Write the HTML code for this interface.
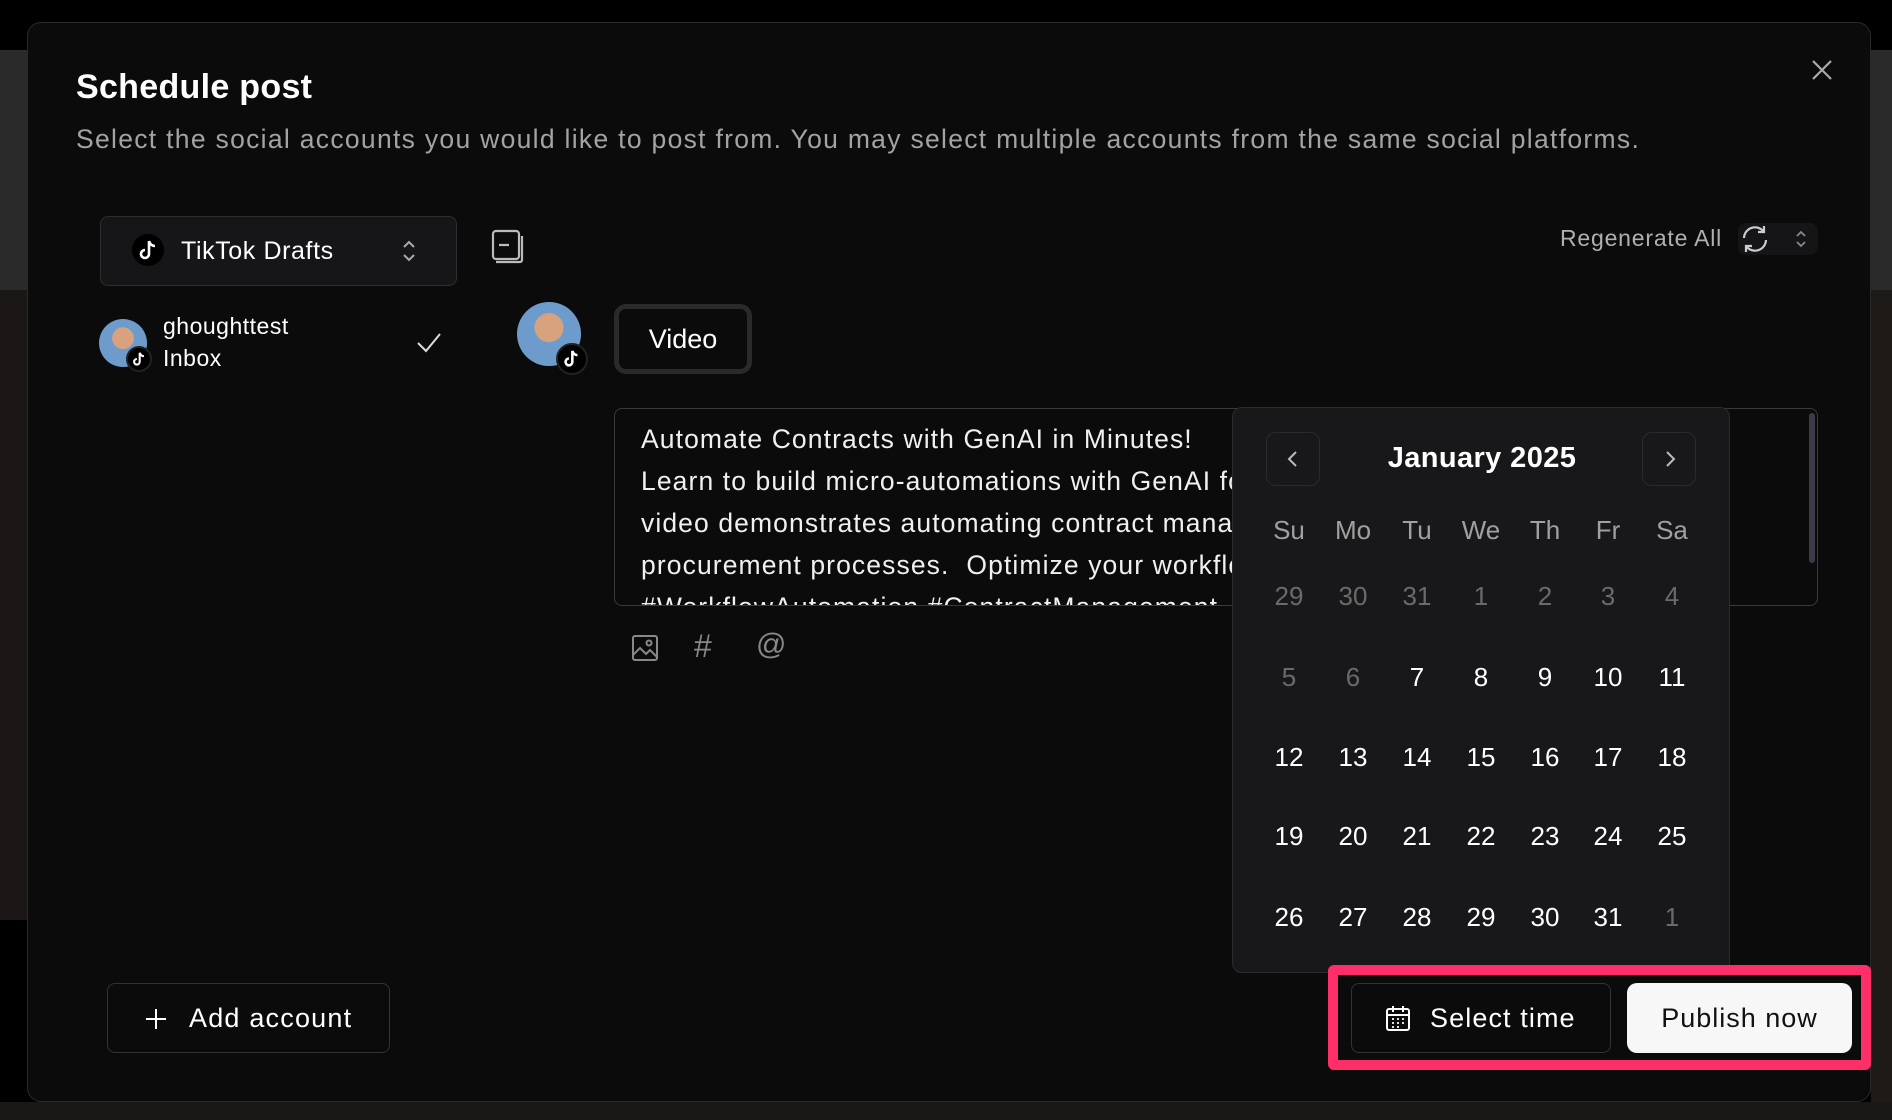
<!DOCTYPE html>
<html><head><meta charset="utf-8"><style>
*{box-sizing:border-box;margin:0;padding:0}
body{width:1892px;height:1120px;background:#000;position:relative;overflow:hidden;font-family:"Liberation Sans",sans-serif;color:#fff}
.a{position:absolute}
.modal{left:27px;top:22px;width:1844px;height:1080px;background:#0b0b0b;border:1px solid #2a2a2a;border-radius:14px}
.cal{left:1232px;top:407px;width:498px;height:566px;background:#18181a;border:1px solid #2c2c2e;border-radius:10px}
.d{position:absolute;width:60px;text-align:center;font-size:26px;transform:translateX(-30px)}
.g{color:#6a6a6a}
.h{color:#a0a0a0}
</style></head><body>
<div class="a" style="left:0;top:50px;width:27px;height:240px;background:#2a2a2a"></div>
<div class="a" style="left:0;top:290px;width:27px;height:630px;background:#1a1716"></div>
<div class="a" style="left:1871px;top:50px;width:21px;height:240px;background:#2a2a2a"></div>
<div class="a" style="left:1871px;top:290px;width:21px;height:820px;background:#1d1a18"></div>
<div class="a" style="left:0;top:1102px;width:1892px;height:18px;background:#1a1816"></div>
<div class="a modal"></div>
<div class="a" style="left:76px;top:68px;font-size:34px;font-weight:bold;letter-spacing:0.3px">Schedule post</div>
<div class="a" style="left:76px;top:124px;font-size:26.5px;letter-spacing:1.3px;color:#a3a3a3;white-space:nowrap">Select the social accounts you would like to post from. You may select multiple accounts from the same social platforms.</div>
<svg class="a" style="left:1810px;top:58px" width="24" height="24" viewBox="0 0 24 24"><path d="M3 3L21 21M21 3L3 21" stroke="#aaa" stroke-width="2.2"/></svg>

<div class="a" style="left:100px;top:216px;width:357px;height:70px;background:#161618;border:1px solid #2e2e30;border-radius:8px"></div>
<div class="a" style="left:132px;top:234px;width:32px;height:32px;border-radius:50%;background:#000"></div>
<svg class="a" style="left:138px;top:238px" width="20" height="24" viewBox="0 0 20 24"><path d="M11 3v13a4 4 0 1 1-4-4M11 3c1 3 3 5 6 5" stroke="#fff" stroke-width="2.6" fill="none"/></svg>
<div class="a" style="left:181px;top:237px;font-size:25px;letter-spacing:0.6px">TikTok Drafts</div>
<svg class="a" style="left:400px;top:238px" width="18" height="26" viewBox="0 0 18 26"><path d="M4 9l5-5 5 5M4 17l5 5 5-5" stroke="#aaa" stroke-width="2" fill="none"/></svg>
<svg class="a" style="left:490px;top:229px" width="34" height="36" viewBox="0 0 34 36"><rect x="3" y="2" width="26" height="28" rx="3" stroke="#bbb" stroke-width="2.2" fill="none"/><path d="M9 16h10M6 33h24a2 2 0 0 0 2-2V7" stroke="#bbb" stroke-width="2.2" fill="none"/></svg>

<div class="a" style="left:99px;top:319px;width:48px;height:48px;border-radius:50%;background:radial-gradient(circle at 50% 40%,#d9a27e 0 28%,#6d9ccc 30%)"></div>
<div class="a" style="left:126px;top:346px;width:26px;height:26px;border-radius:50%;background:#000;border:2px solid #222"></div>
<svg class="a" style="left:132px;top:350px" width="14" height="18" viewBox="0 0 20 24"><path d="M11 3v13a4 4 0 1 1-4-4M11 3c1 3 3 5 6 5" stroke="#fff" stroke-width="3" fill="none"/></svg>
<div class="a" style="left:163px;top:313px;font-size:23px;letter-spacing:0.5px">ghoughttest</div>
<div class="a" style="left:163px;top:345px;font-size:23px;letter-spacing:0.5px">Inbox</div>
<svg class="a" style="left:416px;top:332px" width="26" height="22" viewBox="0 0 26 22"><path d="M2 11l8 8L24 2" stroke="#ddd" stroke-width="2" fill="none"/></svg>

<div class="a" style="left:517px;top:302px;width:64px;height:64px;border-radius:50%;background:radial-gradient(circle at 50% 40%,#d9a27e 0 28%,#6d9ccc 30%)"></div>
<div class="a" style="left:556px;top:343px;width:32px;height:32px;border-radius:50%;background:#000;border:2px solid #222"></div>
<svg class="a" style="left:563px;top:348px" width="17" height="21" viewBox="0 0 20 24"><path d="M11 3v13a4 4 0 1 1-4-4M11 3c1 3 3 5 6 5" stroke="#fff" stroke-width="3" fill="none"/></svg>
<div class="a" style="left:614px;top:304px;width:138px;height:70px;border:5px solid #2a2a2c;border-radius:12px;background:#0b0b0b;font-size:27px;text-align:center;line-height:60px">Video</div>

<div class="a" style="left:1560px;top:225px;font-size:23px;letter-spacing:0.8px;color:#b0b0b0">Regenerate All</div>
<div class="a" style="left:1738px;top:223px;width:80px;height:32px;border-radius:8px;background:#151517"></div>
<svg class="a" style="left:1738px;top:222px" width="34" height="34" viewBox="0 0 34 34"><path d="M6 16a11 11 0 0 1 20-6M28 18a11 11 0 0 1-20 6M26 4v6h-6M8 30v-6h6" stroke="#ccc" stroke-width="2.2" fill="none"/></svg>
<svg class="a" style="left:1794px;top:228px" width="14" height="22" viewBox="0 0 14 22"><path d="M3 8l4-4 4 4M3 14l4 4 4-4" stroke="#888" stroke-width="1.8" fill="none"/></svg>

<div class="a" style="left:614px;top:408px;width:1204px;height:198px;border:1px solid #3a3a3c;border-radius:8px;overflow:hidden">
<div style="position:absolute;left:26px;top:9px;font-size:26.5px;letter-spacing:1.1px;line-height:42px;width:1150px;white-space:nowrap;color:#f0f0f0">Automate Contracts with GenAI in Minutes!<br>Learn to build micro-automations with GenAI for contract management. This<br>video demonstrates automating contract management, from drafting to<br>procurement processes.&nbsp; Optimize your workflow today!<br>#WorkflowAutomation #ContractManagement</div>
<div style="position:absolute;right:2px;top:4px;width:6px;height:150px;background:#3a3a48;border-radius:3px"></div>
</div>
<svg class="a" style="left:631px;top:634px" width="28" height="28" viewBox="0 0 28 28"><rect x="2" y="2" width="24" height="24" rx="2" stroke="#888" stroke-width="2" fill="none"/><path d="M2 21l7-7 6 6 4-4 7 7" stroke="#888" stroke-width="2" fill="none"/><circle cx="18" cy="9" r="2.5" stroke="#888" stroke-width="2" fill="none"/></svg>
<div class="a" style="left:694px;top:628px;font-size:32px;color:#888">#</div>
<div class="a" style="left:756px;top:628px;font-size:30px;color:#888">@</div>

<div class="a cal">
<div class="a" style="left:33px;top:24px;width:54px;height:54px;border:1px solid #2a2a2c;border-radius:10px"></div>
<svg class="a" style="left:50px;top:41px" width="20" height="20" viewBox="0 0 20 20"><path d="M13 3L6 10l7 7" stroke="#bbb" stroke-width="2" fill="none"/></svg>
<div class="a" style="left:409px;top:24px;width:54px;height:54px;border:1px solid #2a2a2c;border-radius:10px"></div>
<svg class="a" style="left:427px;top:41px" width="20" height="20" viewBox="0 0 20 20"><path d="M7 3l7 7-7 7" stroke="#bbb" stroke-width="2" fill="none"/></svg>
<div class="a" style="left:0;width:498px;top:34px;text-align:center;font-size:29px;font-weight:bold;letter-spacing:0.4px">January 2025</div>
</div>
<div id="days"></div>
<script>
var xs=[1289,1353,1417,1481,1545,1608,1672],ys=[530,596,677,757,836,917];
var rows=[["Su","Mo","Tu","We","Th","Fr","Sa"],["29","30","31","1","2","3","4"],["5","6","7","8","9","10","11"],["12","13","14","15","16","17","18"],["19","20","21","22","23","24","25"],["26","27","28","29","30","31","1"]];
var h="";for(var r=0;r<6;r++)for(var c=0;c<7;c++){var cl="d";if(r==0)cl+=" h";else if(r==1||(r==2&&c<2)||(r==5&&c==6))cl+=" g";h+='<div class="'+cl+'" style="left:'+xs[c]+'px;top:'+(ys[r]-15)+'px">'+rows[r][c]+'</div>';}
document.getElementById("days").innerHTML=h;
</script>

<div class="a" style="left:107px;top:983px;width:283px;height:70px;border:1px solid #333;border-radius:8px;font-size:27px;letter-spacing:1.2px;line-height:68px;padding-left:81px">Add account</div>
<svg class="a" style="left:143px;top:1006px" width="26" height="26" viewBox="0 0 26 26"><path d="M13 3v20M3 13h20" stroke="#fff" stroke-width="2"/></svg>

<div class="a" style="left:1328px;top:965px;width:543px;height:105px;border:10px solid #fe2f68;border-radius:6px"></div>
<div class="a" style="left:1351px;top:983px;width:260px;height:70px;border:1px solid #333;border-radius:8px;background:#0b0b0b;font-size:27px;letter-spacing:1.1px;line-height:68px;padding-left:78px">Select time</div>
<svg class="a" style="left:1385px;top:1004px" width="26" height="28" viewBox="0 0 26 28"><rect x="2" y="5" width="22" height="21" rx="2" stroke="#fff" stroke-width="2" fill="none"/><path d="M2 11h22M8 2v6M18 2v6" stroke="#fff" stroke-width="2"/><path d="M7 15h2M12 15h2M17 15h2M7 19h2M12 19h2M17 19h2M7 23h2M12 23h2" stroke="#fff" stroke-width="1.8"/></svg>
<div class="a" style="left:1627px;top:983px;width:225px;height:70px;border-radius:10px;background:#f7f7f7;color:#111;font-size:27px;letter-spacing:1px;line-height:70px;text-align:center">Publish now</div>
</body></html>
